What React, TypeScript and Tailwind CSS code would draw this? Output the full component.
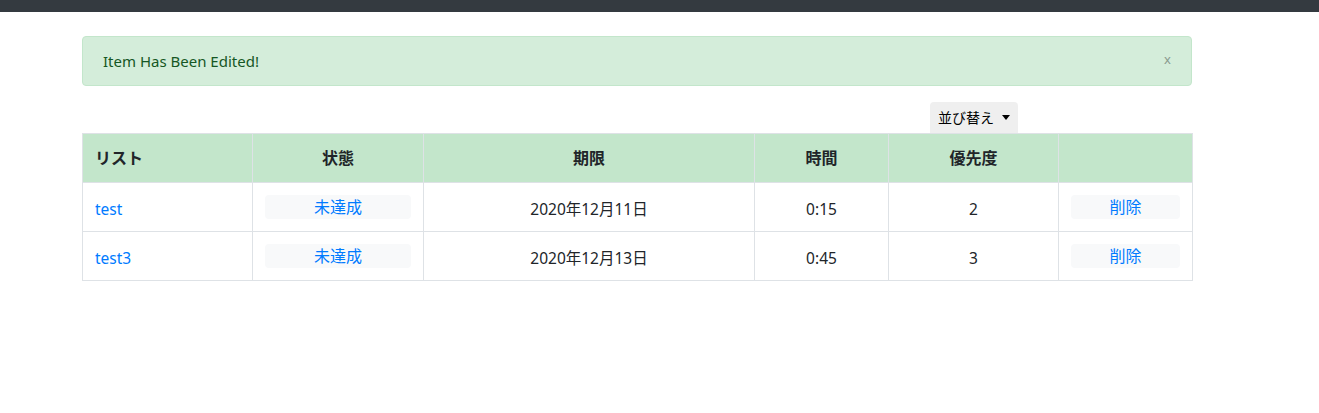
type Task = {
  id: number;
  name: string;
  due: string;
  time: string;
  priority: number;
};

const tasks: Task[] = [
  { id: 1, name: "test", due: "2020年12月11日", time: "0:15", priority: 2 },
  { id: 3, name: "test3", due: "2020年12月13日", time: "0:45", priority: 3 },
];

const font = {
  fontFamily: '"Noto Sans", "Noto Sans CJK JP", sans-serif',
};

export default function App() {
  return (
    <div className="min-h-[413px] bg-white text-[#212529]" style={font}>
      <div className="h-[12px] bg-[#343a40]" />

      <div className="ml-[82px] w-[1110px] pt-[24px]">
        <div className="flex h-[50px] items-center justify-between rounded border border-[#c3e6cb] bg-[#d4edda] pl-[20px] pr-[20px] text-[15px] text-[#155724]">
          <span>Item Has Been Edited!</span>
          <button className="mb-[4px] text-[13px] leading-none text-[#8a9a8e]">x</button>
        </div>

        <div className="mt-[16px] flex justify-end pr-[174px]">
          <button className="flex h-[31px] items-center gap-[8px] rounded-t bg-[#efefef] px-[8px] text-[14px] text-black">
            並び替え
            <span className="h-0 w-0 border-x-[4px] border-t-[5px] border-x-transparent border-t-black" />
          </button>
        </div>

        <table className="w-[1110px] table-fixed border-collapse text-[15.5px]">
          <colgroup>
            <col className="w-[170px]" />
            <col className="w-[171px]" />
            <col className="w-[331px]" />
            <col className="w-[134px]" />
            <col className="w-[170px]" />
            <col className="w-[134px]" />
          </colgroup>
          <thead>
            <tr className="h-[49px] bg-[#c3e6cb] text-[16px] font-bold">
              <th className="border border-[#dee2e6] px-[12px] text-left">リスト</th>
              <th className="border border-[#dee2e6]">状態</th>
              <th className="border border-[#dee2e6]">期限</th>
              <th className="border border-[#dee2e6]">時間</th>
              <th className="border border-[#dee2e6]">優先度</th>
              <th className="border border-[#dee2e6]" />
            </tr>
          </thead>
          <tbody>
            {tasks.map((task) => (
              <tr key={task.id} className="h-[49px]">
                <td className="border border-[#dee2e6] px-[12px] pt-[5px] text-[#007bff]">{task.name}</td>
                <td className="border border-[#dee2e6] px-[12px]">
                  <button className="h-[24px] w-full rounded bg-[#f8f9fa] text-[16px] text-[#007bff]">
                    未達成
                  </button>
                </td>
                <td className="border border-[#dee2e6] pt-[5px] text-center">{task.due}</td>
                <td className="border border-[#dee2e6] pt-[5px] text-center">{task.time}</td>
                <td className="border border-[#dee2e6] pt-[5px] text-center">{task.priority}</td>
                <td className="border border-[#dee2e6] px-[12px]">
                  <button className="h-[24px] w-full rounded bg-[#f8f9fa] text-[16px] text-[#007bff]">
                    削除
                  </button>
                </td>
              </tr>
            ))}
          </tbody>
        </table>
      </div>
    </div>
  );
}
